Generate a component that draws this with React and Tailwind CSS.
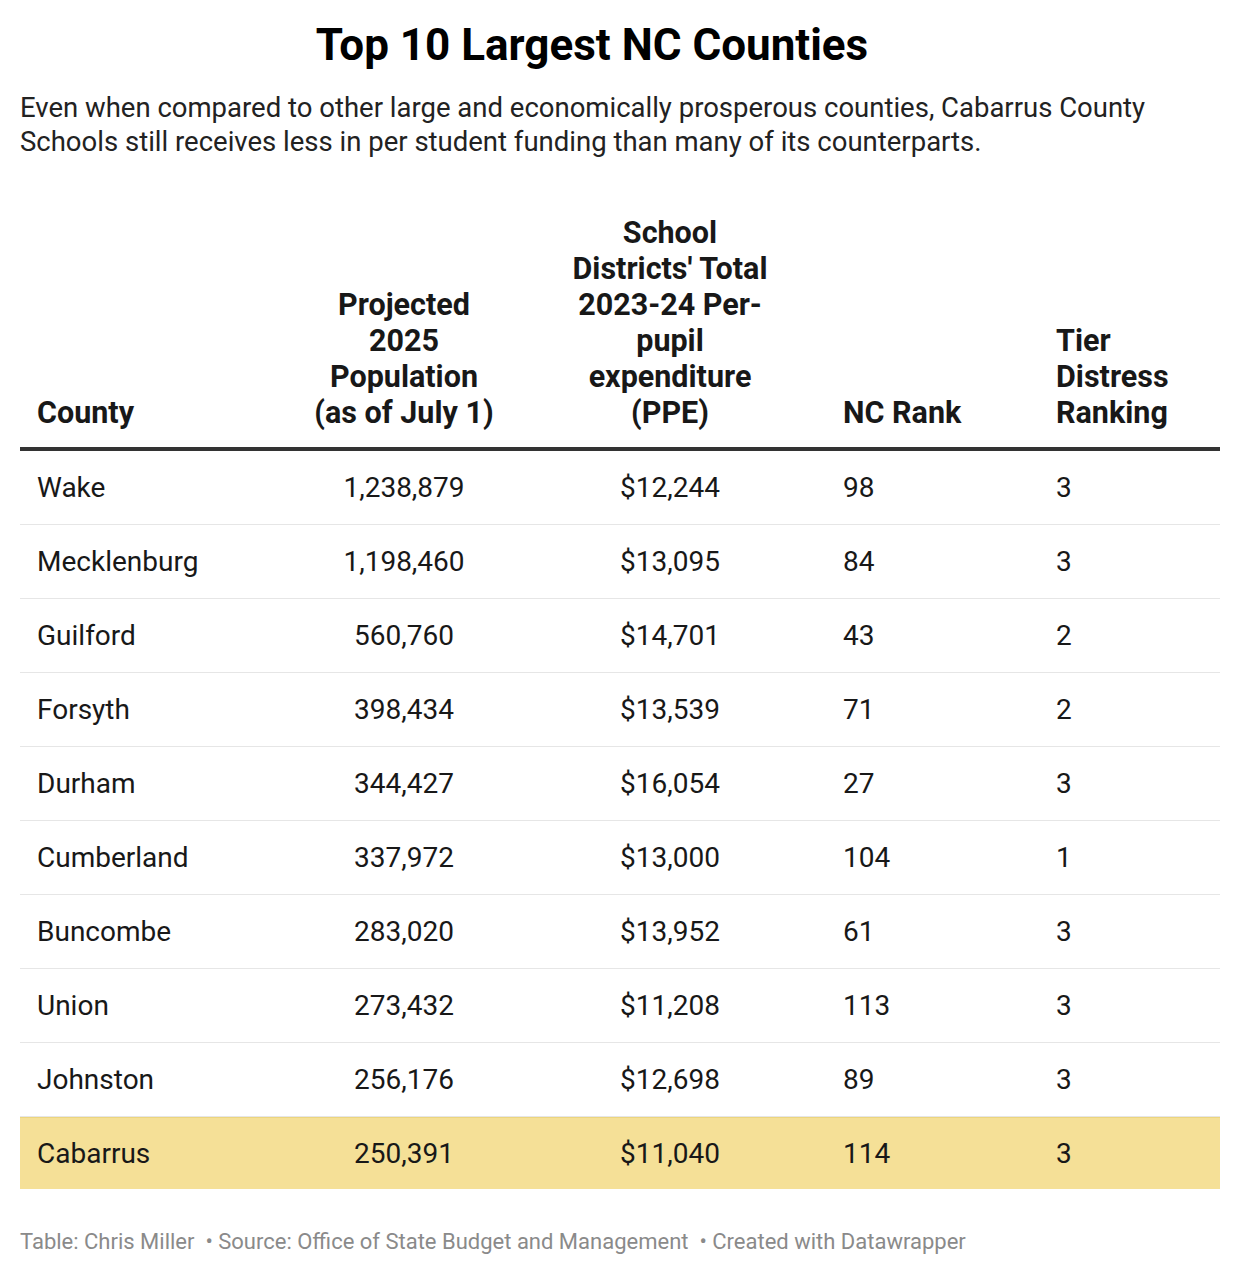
const rows = [
  ['Wake', '1,238,879', '$12,244', '98', '3'],
  ['Mecklenburg', '1,198,460', '$13,095', '84', '3'],
  ['Guilford', '560,760', '$14,701', '43', '2'],
  ['Forsyth', '398,434', '$13,539', '71', '2'],
  ['Durham', '344,427', '$16,054', '27', '3'],
  ['Cumberland', '337,972', '$13,000', '104', '1'],
  ['Buncombe', '283,020', '$13,952', '61', '3'],
  ['Union', '273,432', '$11,208', '113', '3'],
  ['Johnston', '256,176', '$12,698', '89', '3'],
];

const cols = 'grid grid-cols-[274px_220px_312px_213px_181px]';

export default function App() {
  return (
    <div className="w-[1240px] min-h-[1274px] bg-white px-5 text-[#181818]" style={{ fontFamily: 'Roboto, "Liberation Sans", sans-serif' }}>
      <h1 className="pt-[17px] pr-[56px] text-center text-[44px] font-bold leading-[56px] text-black">
        Top 10 Largest NC Counties
      </h1>
      <p className="mt-[18px] text-[27.5px] leading-[34px] text-[#222]">
        Even when compared to other large and economically prosperous counties, Cabarrus County Schools still receives less in per student funding than many of its counterparts.
      </p>

      {/* Table header */}
      <div className={`${cols} mt-[56px] items-end border-b-4 border-[#333] pb-[16px] text-[30.5px] font-bold leading-[36px] text-[#181818]`}>
        <div className="pl-[17px]">County</div>
        <div className="text-center">Projected<br />2025<br />Population<br />(as of July 1)</div>
        <div className="text-center">School<br />Districts' Total<br />2023-24 Per-<br />pupil<br />expenditure<br />(PPE)</div>
        <div className="pl-[17px]">NC Rank</div>
        <div className="pl-[17px]">Tier<br />Distress<br />Ranking</div>
      </div>

      {/* Table body */}
      <div className="text-[28px] text-[#181818]">
        {rows.map((r) => (
          <div key={r[0]} className={`${cols} h-[74px] items-center border-b border-[#e6e6e6]`}>
            <div className="pl-[17px]">{r[0]}</div>
            <div className="text-center">{r[1]}</div>
            <div className="text-center">{r[2]}</div>
            <div className="pl-[17px]">{r[3]}</div>
            <div className="pl-[17px]">{r[4]}</div>
          </div>
        ))}
        <div className={`${cols} h-[72px] items-center border-t border-[#ecd57e] bg-[#f5e097]`}>
          <div className="pl-[17px]">Cabarrus</div>
          <div className="text-center">250,391</div>
          <div className="text-center">$11,040</div>
          <div className="pl-[17px]">114</div>
          <div className="pl-[17px]">3</div>
        </div>
      </div>

      <p className="mt-[40px] text-[22px] leading-[26px] text-[#8a8a8a]">
        Table: Chris Miller&nbsp; • Source: Office of State Budget and Management&nbsp; • Created with Datawrapper
      </p>
    </div>
  );
}
